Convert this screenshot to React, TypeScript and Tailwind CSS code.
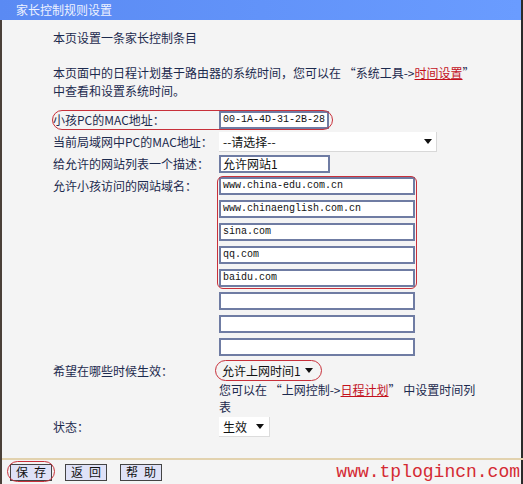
import React from "react";

const cjk = { fontFamily: '"Noto Sans CJK SC", "Noto Sans", sans-serif' };
const mono = { fontFamily: '"Liberation Mono", "DejaVu Sans Mono", monospace' };

const domains = [
  "www.china-edu.com.cn",
  "www.chinaenglish.com.cn",
  "sina.com",
  "qq.com",
  "baidu.com",
  "",
  "",
  "",
];

// small black caret used by the fake selects
const Caret = () => (
  <svg width="8" height="5" viewBox="0 0 8 5" className="shrink-0">
    <path d="M0 0 L8 0 L4 5 Z" fill="#111" />
  </svg>
);

function TextBox({ value, w, isMono }: { value: string; w: string; isMono?: boolean }) {
  return (
    <div
      className={`${w} h-[18px] bg-white border-2 border-[#6f7ca3] flex items-center px-[2px] text-[10px] text-[#111] leading-none whitespace-nowrap`}
      style={isMono ? mono : cjk}
    >
      {isMono ? value : <span className="text-[12px]">{value}</span>}
    </div>
  );
}

const btn = "w-[42px] h-[17px] bg-[#dfe2f7] border border-[#444] text-[12px] leading-none text-[#111]";

export default function App() {
  return (
    <div className="w-[523px] h-[484px] flex flex-col bg-[#f4f4f4] overflow-hidden text-[12px] text-[#1c2a4e]" style={cjk}>
      {/* Title bar */}
      <div className="h-[20px] shrink-0 bg-gradient-to-r from-[#5a8af3] to-[#6a9cff] flex items-center pl-[16px] border-r-2 border-[#2a2a2a]">
        <span className="text-[#eef2ff] text-[12px] leading-none">家长控制规则设置</span>
      </div>

      {/* Body */}
      <div className="flex-1 border-l-2 border-r-2 border-l-[#4a4038] border-r-[#2a2a2a] pl-[51px] pt-[9px]">
        <div className="h-[18px] leading-[18px] text-[12px]">本页设置一条家长控制条目</div>

        <div className="mt-[17px] leading-[18px] whitespace-nowrap">
          本页面中的日程计划基于路由器的系统时间，您可以在 “系统工具-&gt;
          <span className="text-[#c3111d] underline">时间设置</span>”
          <br />
          中查看和设置系统时间。
        </div>

        {/* Form rows */}
        <div className="mt-[10px] flex flex-col">
          <div className="relative flex items-center h-[20px]">
            <div className="w-[166px] text-[12px]">小孩PC的MAC地址：</div>
            <TextBox value="00-1A-4D-31-2B-28" w="w-[110px]" isMono />
            <div className="absolute left-[-1px] top-0 w-[281px] h-[20px] rounded-full border-[1.5px] border-[#c8303a]" />
          </div>

          <div className="flex items-center h-[20px] mt-[2px]">
            <div className="w-[166px]">当前局域网中PC的MAC地址：</div>
            <div className="w-[218px] h-[20px] bg-white border-r border-b border-[#d8d8d8] flex items-center justify-between pl-[4px] pr-[4px]">
              <span className="text-[#111]">--请选择--</span>
              <Caret />
            </div>
          </div>

          <div className="flex items-center h-[20px] mt-[2px]">
            <div className="w-[166px]">给允许的网站列表一个描述：</div>
            <TextBox value="允许网站1" w="w-[111px]" />
          </div>

          <div className="flex mt-[3px]">
            <div className="w-[166px] leading-[18px]">允许小孩访问的网站域名：</div>
            <div className="relative flex flex-col gap-[5px]">
              {domains.map((d, i) => (
                <TextBox key={i} value={d} w="w-[196px]" isMono />
              ))}
              <div className="absolute left-[-2px] top-[-1px] w-[200px] h-[113px] rounded-[6px] border-[1.5px] border-[#c8303a]" />
            </div>
          </div>

          <div className="flex items-center h-[21px] mt-[4px]">
            <div className="w-[166px]">希望在哪些时候生效：</div>
            <div className="relative w-[100px] h-[19px] flex items-center justify-between pl-[3px] pr-[6px]">
              <span className="text-[#111]">允许上网时间1</span>
              <Caret />
              <div className="absolute left-[-4px] top-[-1px] w-[107px] h-[21px] rounded-full border-[1.5px] border-[#c8303a]" />
            </div>
          </div>

          <div className="ml-[166px] leading-[17px] whitespace-nowrap">
            您可以在 “上网控制-&gt;<span className="text-[#c3111d] underline">日程计划</span>” 中设置时间列
            <br />表
          </div>

          <div className="flex items-center h-[20px] mt-[2px]">
            <div className="w-[166px]">状态：</div>
            <div className="w-[51px] h-[20px] bg-white border-r border-b border-[#dcdcdc] flex items-center justify-between pl-[4px] pr-[5px]">
              <span className="text-[#111]">生效</span>
              <Caret />
            </div>
          </div>
        </div>
      </div>

      {/* Divider */}
      <div className="h-[2px] shrink-0 bg-[#e2d2ae] border-l-2 border-[#4a4038]" />

      {/* Footer */}
      <div className="h-[24px] shrink-0 border-l-2 border-r-2 border-l-[#4a4038] border-r-[#2a2a2a] flex items-center pl-[8px] gap-[13px]">
        <div className="relative">
          <button className={btn}>保{"\u2002"}存</button>
          <div className="absolute left-[-3px] top-[-2px] w-[48px] h-[21px] rounded-full border-[1.5px] border-[#c8303a]" />
        </div>
        <button className={btn}>返{"\u2002"}回</button>
        <button className={btn}>帮{"\u2002"}助</button>
        <div className="ml-auto mr-[1px] text-[18px] leading-[20px] text-[#d42a33] whitespace-nowrap" style={mono}>
          www.tplogincn.com
        </div>
      </div>
    </div>
  );
}
